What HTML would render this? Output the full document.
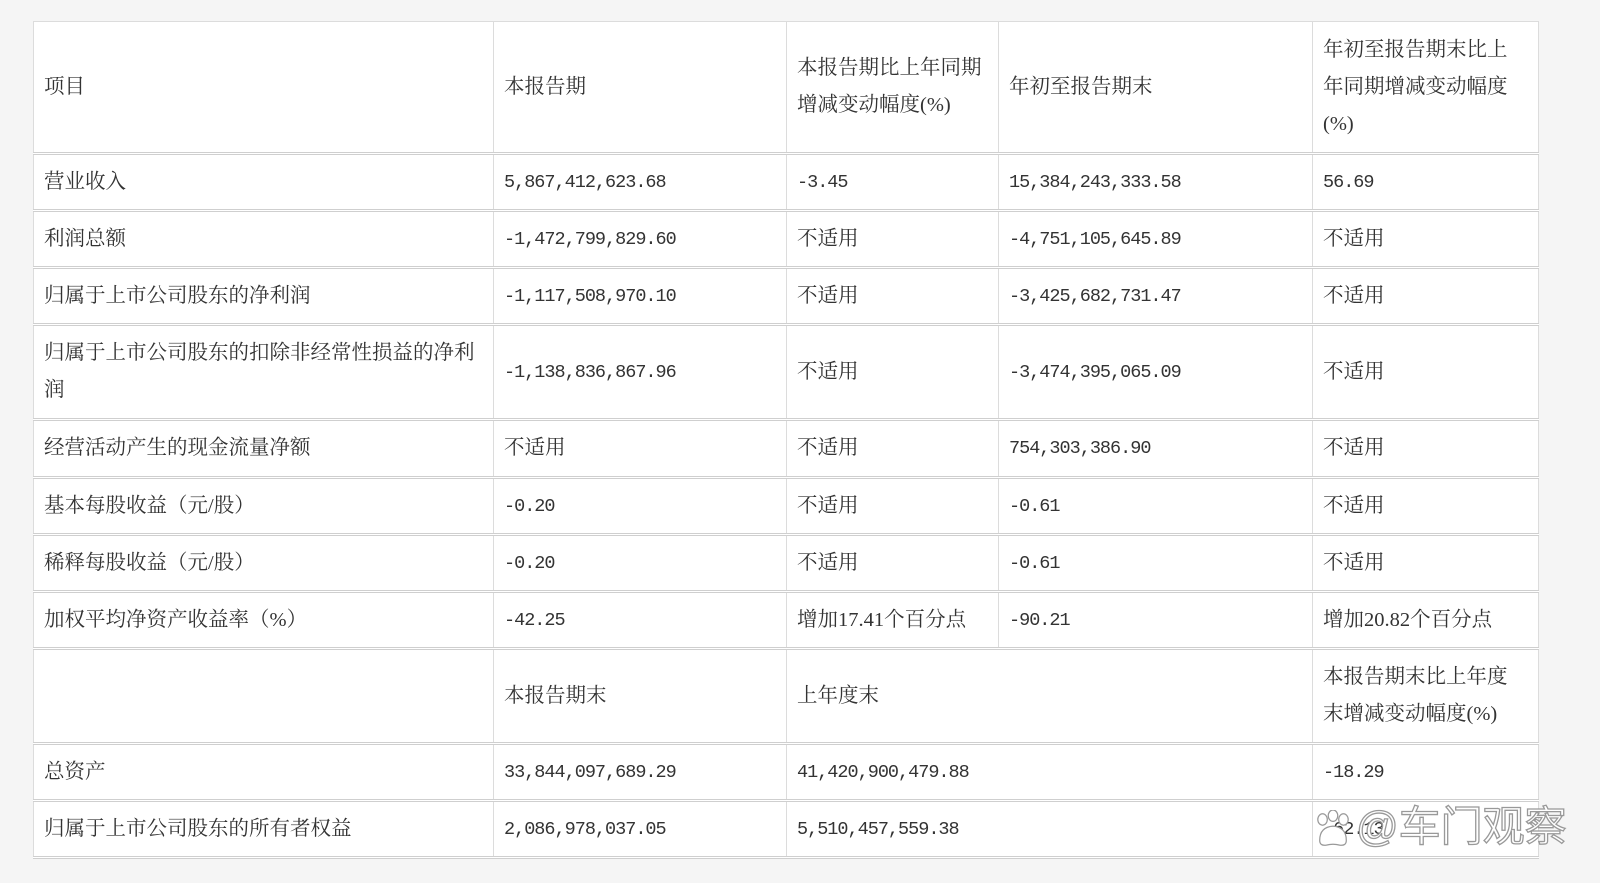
<!DOCTYPE html>
<html><head><meta charset="utf-8">
<style>
html,body{margin:0;padding:0;background:#f5f5f5;width:1600px;height:883px;overflow:hidden}
table{position:absolute;left:33px;top:21px;border-collapse:collapse;table-layout:fixed;background:#fff;border:1px solid #dcdcdc}
td{border-left:1px solid #dcdcdc;border-right:1px solid #dcdcdc;border-bottom:3px double #cfcfcf;padding:0 18px 0 10px;vertical-align:middle;
font-family:"Liberation Serif","Noto Serif CJK SC",serif;font-size:20.5px;color:#333;line-height:37px;overflow:hidden;white-space:nowrap}
td.w{white-space:normal}
td.l{padding-right:30px}
td.s{padding-right:4px}
.n{font-family:"Liberation Mono","Noto Serif CJK SC",monospace;font-size:18.5px;letter-spacing:-1px}
.wm{position:absolute;top:802px;font-family:"Liberation Sans","Noto Sans CJK SC",sans-serif;font-size:42px;color:#fff;
-webkit-text-stroke:1.3px #999;letter-spacing:0px;line-height:50px}
.paw{position:absolute;left:1314px;top:810px}
</style></head><body>
<table>
<colgroup><col style="width:460px"><col style="width:293px"><col style="width:212px"><col style="width:314px"><col style="width:226px"></colgroup>
<tr style="height:132px"><td>项目</td><td>本报告期</td><td class="w s">本报告期比上年同期增减变动幅度(%)</td><td>年初至报告期末</td><td class="w l">年初至报告期末比上年同期增减变动幅度(%)</td></tr>
<tr style="height:57px"><td>营业收入</td><td class="n">5,867,412,623.68</td><td class="n">-3.45</td><td class="n">15,384,243,333.58</td><td class="n">56.69</td></tr>
<tr style="height:57px"><td>利润总额</td><td class="n">-1,472,799,829.60</td><td>不适用</td><td class="n">-4,751,105,645.89</td><td>不适用</td></tr>
<tr style="height:57px"><td>归属于上市公司股东的净利润</td><td class="n">-1,117,508,970.10</td><td>不适用</td><td class="n">-3,425,682,731.47</td><td>不适用</td></tr>
<tr style="height:95px"><td class="w">归属于上市公司股东的扣除非经常性损益的净利润</td><td class="n">-1,138,836,867.96</td><td>不适用</td><td class="n">-3,474,395,065.09</td><td>不适用</td></tr>
<tr style="height:58px"><td>经营活动产生的现金流量净额</td><td>不适用</td><td>不适用</td><td class="n">754,303,386.90</td><td>不适用</td></tr>
<tr style="height:57px"><td>基本每股收益（元/股）</td><td class="n">-0.20</td><td>不适用</td><td class="n">-0.61</td><td>不适用</td></tr>
<tr style="height:57px"><td>稀释每股收益（元/股）</td><td class="n">-0.20</td><td>不适用</td><td class="n">-0.61</td><td>不适用</td></tr>
<tr style="height:57px"><td>加权平均净资产收益率（%）</td><td class="n">-42.25</td><td>增加17.41个百分点</td><td class="n">-90.21</td><td>增加20.82个百分点</td></tr>
<tr style="height:95px"><td></td><td>本报告期末</td><td colspan="2">上年度末</td><td class="w l">本报告期末比上年度末增减变动幅度(%)</td></tr>
<tr style="height:57px"><td>总资产</td><td class="n">33,844,097,689.29</td><td colspan="2" class="n">41,420,900,479.88</td><td class="n">-18.29</td></tr>
<tr style="height:57px"><td>归属于上市公司股东的所有者权益</td><td class="n">2,086,978,037.05</td><td colspan="2" class="n">5,510,457,559.38</td><td class="n">-62.13</td></tr>
</table>
<svg class="paw" width="38" height="38" viewBox="0 0 40 40">
<g fill="#fff" stroke="#999" stroke-width="1.3">
<ellipse cx="9" cy="10" rx="5" ry="6"/><ellipse cx="20" cy="6" rx="5" ry="6"/><ellipse cx="31" cy="10" rx="5" ry="6"/>
<path d="M6 32 Q6 18 20 17 Q34 18 34 32 Q34 38 27 37 Q20 35 13 37 Q6 38 6 32Z"/></g></svg>
<div class="wm" style="left:1356px">@车门观察</div>
</body></html>
